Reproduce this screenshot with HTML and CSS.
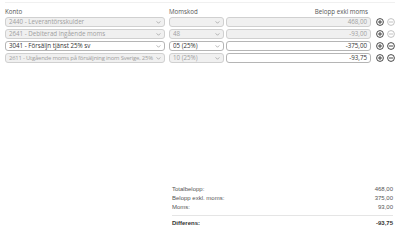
FILE: index.html
```html
<!DOCTYPE html>
<html lang="sv">
<head>
  <meta charset="UTF-8" />
  <title>Kontering</title>
  <link rel="stylesheet" href="styles.css">
</head>
<body>

  <div class="topbar"></div>

  <div class="rows">
    <div class="row head">
      <div class="col-konto">Konto</div>
      <div class="col-moms">Momskod</div>
      <div class="col-belopp">Belopp exkl moms</div>
      <div class="col-actions"></div>
    </div>

    <div class="row">
      <div class="field select disabled col-konto"><span>2440 - Leverantörsskulder</span><svg class="chev" viewBox="0 0 6 4"><path d="M0.5 0.5 L3 3 L5.5 0.5"/></svg></div>
      <div class="field select disabled col-moms"><span></span><svg class="chev" viewBox="0 0 6 4"><path d="M0.5 0.5 L3 3 L5.5 0.5"/></svg></div>
      <div class="field amount disabled col-belopp">468,00</div>
      <div class="col-actions">
        <svg class="btn" viewBox="0 0 8 8"><circle cx="4" cy="4" r="3.4"/><path d="M4 2 V6 M2 4 H6"/></svg>
        <svg class="btn off" viewBox="0 0 8 8"><circle cx="4" cy="4" r="3.4"/><path d="M2 4 H6"/></svg>
      </div>
    </div>

    <div class="row">
      <div class="field select disabled col-konto"><span>2641 - Debiterad ingående moms</span><svg class="chev" viewBox="0 0 6 4"><path d="M0.5 0.5 L3 3 L5.5 0.5"/></svg></div>
      <div class="field select disabled col-moms"><span>48</span><svg class="chev" viewBox="0 0 6 4"><path d="M0.5 0.5 L3 3 L5.5 0.5"/></svg></div>
      <div class="field amount disabled col-belopp">-93,00</div>
      <div class="col-actions">
        <svg class="btn" viewBox="0 0 8 8"><circle cx="4" cy="4" r="3.4"/><path d="M4 2 V6 M2 4 H6"/></svg>
        <svg class="btn off" viewBox="0 0 8 8"><circle cx="4" cy="4" r="3.4"/><path d="M2 4 H6"/></svg>
      </div>
    </div>

    <div class="row">
      <div class="field select col-konto"><span>3041 - Försäljn tjänst 25% sv</span><svg class="chev" viewBox="0 0 6 4"><path d="M0.5 0.5 L3 3 L5.5 0.5"/></svg></div>
      <div class="field select col-moms"><span>05 (25%)</span><svg class="chev" viewBox="0 0 6 4"><path d="M0.5 0.5 L3 3 L5.5 0.5"/></svg></div>
      <div class="field amount col-belopp">-375,00</div>
      <div class="col-actions">
        <svg class="btn" viewBox="0 0 8 8"><circle cx="4" cy="4" r="3.4"/><path d="M4 2 V6 M2 4 H6"/></svg>
        <svg class="btn" viewBox="0 0 8 8"><circle cx="4" cy="4" r="3.4"/><path d="M2 4 H6"/></svg>
      </div>
    </div>

    <div class="row">
      <div class="field select disabled col-konto"><span class="long">2611 - Utgående moms på försäljning inom Sverige, 25%</span><svg class="chev" viewBox="0 0 6 4"><path d="M0.5 0.5 L3 3 L5.5 0.5"/></svg></div>
      <div class="field select disabled col-moms"><span>10 (25%)</span><svg class="chev" viewBox="0 0 6 4"><path d="M0.5 0.5 L3 3 L5.5 0.5"/></svg></div>
      <div class="field amount col-belopp">-93,75</div>
      <div class="col-actions">
        <svg class="btn" viewBox="0 0 8 8"><circle cx="4" cy="4" r="3.4"/><path d="M4 2 V6 M2 4 H6"/></svg>
        <svg class="btn" viewBox="0 0 8 8"><circle cx="4" cy="4" r="3.4"/><path d="M2 4 H6"/></svg>
      </div>
    </div>
  </div>

  <div class="summary">
    <div class="sum-row"><span>Totalbelopp:</span><span>468,00</span></div>
    <div class="sum-row"><span>Belopp exkl. moms:</span><span>375,00</span></div>
    <div class="sum-row"><span>Moms:</span><span>93,00</span></div>
    <div class="sum-row total"><span>Differens:</span><span>-93,75</span></div>
  </div>

</body>
</html>
```

FILE: styles.css
```css
body {
  margin: 0;
  padding: 0;
  background: #fff;
  color: #444;
  font-family: 'Open Sans', sans-serif;
  font-size: 6.2px;
}
.topbar {
  height: 2px;
  margin: 0 5px;
  border-bottom: 1px solid #f0f0f0;
}
.rows {
  padding: 3px 0 0 5px;
}
.row {
  display: flex;
  align-items: center;
  height: 10px;
  margin-bottom: 2px;
}
.row.head {
  height: 10px;
  margin-bottom: 1.3px;
  color: #555;
}
.col-konto {
  width: 160px;
  margin-right: 4px;
}
.col-moms {
  width: 55px;
  margin-right: 2px;
}
.col-belopp {
  width: 145px;
  margin-right: 5px;
}
.head .col-belopp {
  text-align: right;
  padding-right: 3px;
  box-sizing: border-box;
}
.field {
  box-sizing: border-box;
  height: 10px;
  border: 1px solid #b5b5b5;
  border-radius: 3px;
  background: #fff;
  color: #333;
  display: flex;
  align-items: center;
  padding: 0 3px;
  line-height: 8px;
  white-space: nowrap;
}
.field.disabled {
  background: #f0f0f0;
  border-color: #d0d0d0;
  color: #a0a0a0;
}
.field.select span {
  flex-grow: 1;
  min-width: 0;
  overflow: hidden;
}
.field.select span.long {
  font-size: 5.9px;
  letter-spacing: -0.2px;
}
.field.amount {
  justify-content: flex-end;
}
.chev {
  flex-shrink: 0;
  width: 5px;
  height: 3px;
  margin-left: 2px;
  fill: none;
  stroke: #888;
  stroke-width: 0.8;
}
.col-actions {
  display: flex;
  gap: 3px;
}
.btn {
  width: 8px;
  height: 8px;
  fill: none;
  stroke: #333;
  stroke-width: 0.9;
}
.btn.off {
  stroke: #bbb;
}
.summary {
  margin: 122px 7px 0 172px;
  font-family: 'Liberation Sans', Arial, sans-serif;
  font-size: 6px;
  color: #555;
}
.sum-row {
  display: flex;
  justify-content: space-between;
  height: 9px;
  line-height: 9px;
}
.sum-row.total {
  margin-top: 2.5px;
  padding-top: 3.5px;
  border-top: 1px solid #e5e5e5;
  font-weight: bold;
  color: #333;
}
```
